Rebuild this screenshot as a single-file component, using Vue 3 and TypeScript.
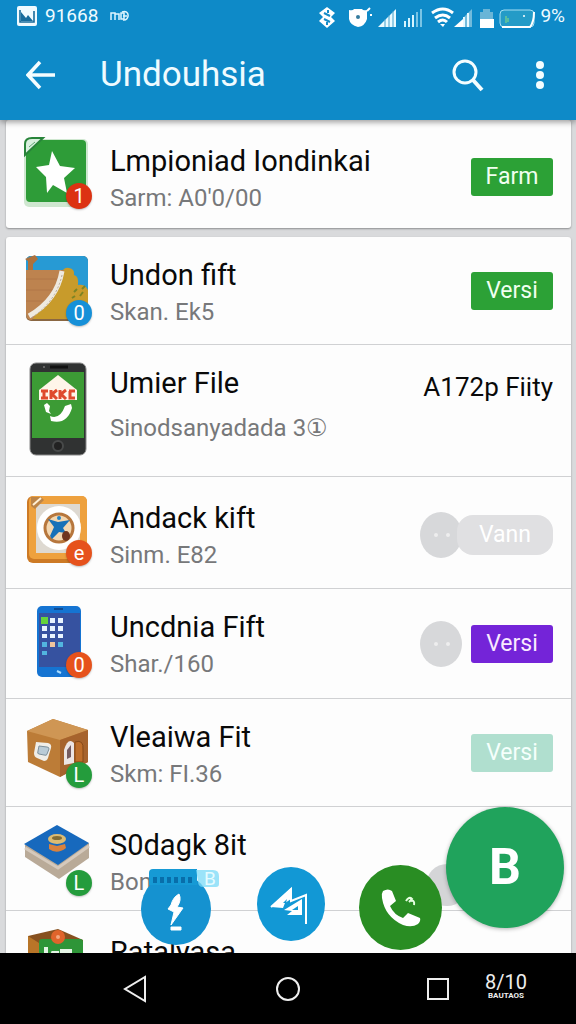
<script setup lang="ts">
interface Item {
  icon: string
  title: string
  sub?: string
  size: string
  action?: string
  tone?: string
  price?: string
  avatar?: boolean
  badge?: string
  badgeTone?: string
}

const groups: Item[][] = [
  [
    { icon: 'star', title: 'Lmpioniad Iondinkai', sub: "Sarm: A0'0/00", size: 'first', action: 'Farm', tone: 'green', badge: '1', badgeTone: 'red' },
  ],
  [
    { icon: 'desert', title: 'Undon fift', sub: 'Skan. Ek5', size: 'medium', action: 'Versi', tone: 'green', badge: '0', badgeTone: 'blue' },
    { icon: 'phone', title: 'Umier File', sub: 'Sinodsanyadada 3①', size: 'tall', price: 'A172p Fiity' },
    { icon: 'frame', title: 'Andack kift', sub: 'Sinm. E82', size: 'roomy', action: 'Vann', tone: 'muted', avatar: true, badge: 'e', badgeTone: 'orange' },
    { icon: 'tablet', title: 'Uncdnia Fift', sub: 'Shar./160', size: 'large', action: 'Versi', tone: 'purple', avatar: true, badge: '0', badgeTone: 'orange' },
    { icon: 'box', title: 'Vleaiwa Fit', sub: 'Skm: FI.36', size: 'medium', action: 'Versi', tone: 'mint', badge: 'L', badgeTone: 'leaf' },
    { icon: 'book', title: 'S0dagk 8it', sub: 'Bons', size: 'small', badge: 'L', badgeTone: 'leaf' },
    { icon: 'crate', title: 'Ratalyasa', size: 'last' },
  ],
]
</script>

<template>
  <div class="screen">
    <header class="header">
      <div class="status">
        <svg class="status-picture" viewBox="0 0 20 20" aria-hidden="true">
          <rect width="20" height="20" rx="2" fill="#effaff" />
          <path d="M3 4v12h14V5" fill="none" stroke="#176b9c" stroke-width="1.6" />
          <path d="M4 15V6l5 6 2-3 5 6z" fill="#176b9c" />
        </svg>
        <span>91668</span>
        <svg class="status-link" viewBox="0 0 20 12" aria-hidden="true">
          <path d="M1 10V3h4v7M5 4h4v6M9 10V4M11 3h3v6h-3z" fill="none" stroke="#dff6ff" stroke-width="1.5" />
          <path d="M12 2c8-3 8 9 1 8M13 6h4" fill="none" stroke="#dff6ff" stroke-width="1.5" />
        </svg>
        <svg class="status-icons" viewBox="0 0 220 24" aria-hidden="true">
          <path d="M9 3l8 6-4 4 4 4-8 7-8-7 4-4-4-4z" fill="#fff" />
          <path d="M6 9l6 3M6 15l6 3M10 6v3M9 18v3" stroke="#168cc7" stroke-width="2" />
          <path d="M31 6q4 1 5-1h8q1 2 5 1v9q-2 7-9 8-8-2-9-8z" fill="#fff" />
          <circle cx="40" cy="13" r="2" fill="#347b9e" />
          <path d="M49 7l3-3M52 11h2" stroke="#fff" stroke-width="2" />
          <path d="M60 23L78 5v18z" fill="#e9faff" />
          <path d="M67 15v8M71 11v12M75 7v16" stroke="#419fcc" stroke-width="1" />
          <path d="M87 17v6M91 14v9M95 11v12" stroke="#d6f5ff" stroke-width="2" />
          <path d="M99 8v15M103 5v18" stroke="#79c4e5" stroke-width="2" />
          <path d="M114 9q11-8 21 0M117 14q8-6 15 0M120 18q5-4 9 0" fill="none" stroke="#fff" stroke-width="3" />
          <path d="M122 20h5l-2 3z" fill="#fff" />
          <path d="M136 23l9-8v8z" fill="#fff" />
          <path d="M146 13l8-8v18h-8z" fill="#72bbdc" />
          <path d="M146 13v10M150 9v14" stroke="#e5f8ff" stroke-width="2" />
          <path d="M162 8h3V5h7v3h3v7h-13z" fill="#69b5d7" />
          <rect x="162" y="15" width="14" height="9" fill="#fff" />
          <rect x="182" y="6" width="34" height="17" rx="4" fill="#249bc7" stroke="#a5dff3" />
          <path d="M184 23h28q4-5 4-15" fill="none" stroke="#fff" stroke-width="2" />
          <path d="M188 12v7M190 14v4" stroke="#57bda2" stroke-width="2" />
          <circle cx="206" cy="12" r="1" fill="#fff" />
        </svg>
        <span class="battery">9%</span>
      </div>
      <div class="toolbar">
        <button class="icon-button" aria-label="Back">
          <svg width="30" height="30" viewBox="0 0 30 30"><path d="M14 2L2 15l12 13M2 15h27" fill="none" stroke="#f4fdff" stroke-width="3.500" /></svg>
        </button>
        <h1>Undouhsia</h1>
        <button class="icon-button search" aria-label="Search">
          <svg width="34" height="34" viewBox="0 0 34 34"><circle cx="14" cy="14" r="11" fill="none" stroke="#f4fdff" stroke-width="3" /><path d="M22 22l9 10" stroke="#f4fdff" stroke-width="4" /></svg>
        </button>
        <button class="icon-button" aria-label="More">
          <svg width="10" height="30" viewBox="0 0 10 30"><g fill="#f4fdff"><circle cx="5" cy="5" r="4" /><circle cx="5" cy="15" r="4" /><circle cx="5" cy="25" r="4" /></g></svg>
        </button>
      </div>
    </header>

    <main class="content">
      <ul v-for="(group, g) in groups" :key="g" class="card">
        <li v-for="item in group" :key="item.title" :class="['row', 'row-' + item.size]">
          <div class="thumb">
            <svg v-if="item.icon === 'star'" viewBox="0 0 68 72" aria-hidden="true">
              <rect y="2" width="64" height="68" rx="5" fill="#cfe7d0" />
              <rect x="2" y="3" width="60" height="62" rx="4" fill="#2e9c38" />
              <path d="M28 14l8 15 15 2-11 10 3 15-14-8-6 8-1-16-10-10 13-2z" fill="#fff" />
              <path d="M1 18V7q0-6 7-6h11z" fill="#d9f0df" stroke="#28843a" stroke-width="2" />
              <path d="M5 10l6-5" stroke="#60a875" />
            </svg>
            <svg v-else-if="item.icon === 'desert'" viewBox="0 0 68 72" aria-hidden="true">
              <rect x="2" y="2" width="62" height="65" rx="5" fill="#8a6742" />
              <rect x="2" y="2" width="62" height="63" rx="5" fill="#279ad4" />
              <path d="M8 65l29-46q3-6 8-5 6 1 5 7 5 1 4 10 7-1 10 5v29z" fill="#c89b2b" />
              <path d="M50 38l3-3M56 42l3-4M48 44l3-2M58 35l3-3" stroke="#7c8424" stroke-width="2" />
              <path d="M2 16h38Q35 45 12 60L8 66q-6 0-6-6z" fill="#bd834f" />
              <path d="M2 25h35M2 36h32M2 47h22" stroke="#b17748" />
              <path d="M38 17Q33 46 5 62" fill="none" stroke="#eee9df" stroke-width="5" />
              <path d="M38 21Q32 48 7 64" fill="none" stroke="#b8ab9c" stroke-dasharray="2 2" />
              <path d="M1 5l10-4 3 4-5 5v6H4V7z" fill="#ae713d" />
            </svg>
            <svg v-else-if="item.icon === 'phone'" class="thumb-tall" viewBox="0 0 68 96" aria-hidden="true">
              <rect x="6" y="1" width="56" height="92" rx="6" fill="#303232" stroke="#888" />
              <path d="M26 5h18" stroke="#111" stroke-width="3" />
              <circle cx="20" cy="5" r="1" fill="#777" />
              <rect x="8" y="10" width="52" height="66" fill="#3c9b35" />
              <path d="M15 28l19-15 19 15v10H15z" fill="#fff5e9" />
              <path d="M17 29h7m-4 0v7m-3 0h7M27 28v9M33 28l-5 4 5 5M36 28v9M42 28l-5 4 5 5M45 29h6m-5 0v7h5" fill="none" stroke="#df4b2d" stroke-width="3" />
              <path d="M20 43l3-2 3 3-1 5 2 3-5-2zM26 54q10 4 15-10l6-2 1 4q-5 17-21 13z" fill="#fff" />
              <circle cx="34" cy="84" r="5" fill="#222" stroke="#484a4a" stroke-width="2" />
            </svg>
            <svg v-else-if="item.icon === 'frame'" viewBox="0 0 68 72" aria-hidden="true">
              <rect x="3" y="2" width="60" height="67" rx="6" fill="#cd7a25" />
              <rect x="5" y="2" width="58" height="63" rx="5" fill="#eea13e" />
              <rect x="12" y="10" width="44" height="49" fill="#ded9d1" />
              <circle cx="35" cy="34" r="22" fill="#fff" />
              <circle cx="35" cy="34" r="14" fill="#f3d7b1" stroke="#b7773d" stroke-width="3" />
              <path d="M24 25l10 3 12-2-7 8 3 5-7-1-7 7-2-3 4-9z" fill="#1771b8" />
              <circle cx="35" cy="24" r="2" fill="#2583c5" />
              <ellipse cx="42" cy="42" rx="4" ry="5" fill="#6f351f" />
              <path d="M7 3h10l3 3-9 9-4-3z" fill="#bc8447" /><path d="M9 11l8-7" stroke="#fff0d5" stroke-width="2" />
            </svg>
            <svg v-else-if="item.icon === 'tablet'" viewBox="0 0 68 72" aria-hidden="true">
              <rect x="13" width="44" height="71" rx="5" fill="#1574d2" />
              <rect x="15" y="7" width="41" height="54" fill="#3652a0" />
              <path d="M30 3h9" stroke="#0f4b92" stroke-width="2" />
              <g fill="#e8f4ff">
                <rect x="26" y="12" width="5" height="5" /><rect x="34" y="12" width="5" height="5" />
                <rect x="18" y="20" width="5" height="5" /><rect x="26" y="20" width="5" height="5" /><rect x="34" y="20" width="5" height="5" />
                <rect x="18" y="28" width="5" height="4" /><rect x="26" y="28" width="5" height="4" /><rect x="34" y="28" width="5" height="4" />
              </g>
              <rect x="17" y="11" width="7" height="7" fill="#65d43b" />
              <g fill="#52b5df"><rect x="18" y="36" width="5" height="5" /><rect x="34" y="36" width="5" height="5" /><rect x="18" y="45" width="5" height="4" /></g>
              <rect x="26" y="36" width="5" height="5" fill="#efc49d" />
              <path d="M33 65l4 2" stroke="#a8dcff" stroke-width="2" />
            </svg>
            <svg v-else-if="item.icon === 'box'" viewBox="0 0 68 72" aria-hidden="true">
              <path d="M3 15L29 3l35 11v32L36 61 4 46z" fill="#bc7c37" />
              <path d="M3 15L29 3l35 11-28 10z" fill="#cf9654" />
              <path d="M36 24l28-10v32L36 61z" fill="#a6632d" />
              <path d="M12 26l12 1q4 1 3 5l-3 10q-1 3-4 3l-7-3q-3-1-3-5z" fill="#f0eee8" />
              <path d="M15 30l8 1q2 0 2 2l-2 5q0 2-3 1l-5-1q-2 0-1-3z" fill="#b9cbd6" stroke="#7d909b" />
              <path d="M40 49V34q4-13 10-7v20z" fill="#ece4e4" />
              <path d="M43 43V34l4-5v12z" fill="#755b61" /><path d="M51 26q9-3 8 8v12h-8z" fill="#be6e2b" stroke="#854817" />
            </svg>
            <svg v-else-if="item.icon === 'book'" viewBox="0 0 68 72" aria-hidden="true">
              <path d="M1 21v12l34 22 30-21V19z" fill="#b9aa98" /><path d="M1 24l33 20 31-22" fill="none" stroke="#d5c9bc" stroke-width="3" />
              <path d="M0 20L33 1l32 18-31 22z" fill="#1769bd" />
              <ellipse cx="33" cy="15" rx="9" ry="5" fill="#dcbb72" /><ellipse cx="33" cy="14" rx="5" ry="2" fill="#816c35" />
              <path d="M25 20l8 2 8-2 1 4q-9 7-17 1z" fill="#d8823e" />
            </svg>
            <svg v-else viewBox="0 0 68 72" aria-hidden="true">
              <path d="M4 8L34 1l25 11v56H4z" fill="#87511f" /><path d="M4 8l11 7v45H4z" fill="#b87528" />
              <rect x="15" y="11" width="44" height="55" rx="3" fill="#2e9538" />
              <path d="M22 19v12h5l2-6h6M38 31v-8h8v8" fill="none" stroke="#e5f4e5" stroke-width="4" />
              <circle cx="34" cy="9" r="7" fill="#df642b" /><circle cx="34" cy="9" r="2" fill="#f4a77e" />
            </svg>
            <span v-if="item.badge" :class="['badge', 'badge-' + item.badgeTone]">{{ item.badge }}</span>
          </div>
          <div class="text">
            <h2>{{ item.title }}</h2>
            <p v-if="item.sub">{{ item.sub }}</p>
          </div>
          <div class="aside">
            <svg v-if="item.avatar" class="avatar" viewBox="0 0 42 46" aria-hidden="true">
              <ellipse cx="21" cy="23" rx="21" ry="23" fill="#d7d8da" /><circle cx="16" cy="23" r="2" fill="#eee" /><circle cx="28" cy="23" r="2" fill="#eee" />
            </svg>
            <span v-if="item.price" class="price">{{ item.price }}</span>
            <button v-if="item.action" :class="['action', 'action-' + item.tone]">{{ item.action }}</button>
          </div>
        </li>
      </ul>

      <span class="ghost" />
      <button class="fab fab-flash" aria-label="Quick action">
        <svg width="80" height="78" viewBox="0 0 80 78">
          <ellipse cx="35" cy="42" rx="35" ry="36" fill="#1592d0" />
          <path d="M8 18V6q0-4 4-4h44v16z" fill="#169ad5" />
          <path d="M12 13h42" stroke="#086eaa" stroke-width="6" stroke-dasharray="4 3" />
          <path d="M55 3h17q6 0 6 6v8q0 3-3 3H62q-5 0-5-6z" fill="#79d9f7" opacity=".75" />
          <text x="63" y="18" font-family="Roboto, sans-serif" font-size="19" fill="#e6fbff">B</text>
          <path d="M38 27q-6 3-8 11l-3 4 6 3-3 13 12-17-6-1q5-7 2-13zM30 60h10v3H30z" fill="#fff" stroke="#fff" />
        </svg>
      </button>
      <button class="fab fab-send" aria-label="Send">
        <svg width="68" height="74" viewBox="0 0 68 74">
          <ellipse cx="34" cy="37" rx="34" ry="37" fill="#1298d5" />
          <path d="M14 40l20-18v12l15-6v29" fill="none" stroke="#fff" stroke-width="2" />
          <path d="M14 40l20-19v11l-6 4-2 5zM27 43l18-11v16H30l5-4z" fill="#fff" />
          <path d="M26 36l4-4-1 4zM35 43l6-4v4z" fill="#1298d5" />
        </svg>
      </button>
      <button class="fab fab-call" aria-label="Call">
        <svg width="83" height="85" viewBox="0 0 83 85">
          <ellipse cx="41.500" cy="42.500" rx="41.500" ry="42.500" fill="#298d23" />
          <path d="M24 26q5-3 9 0l4 10-6 5q4 9 13 12l5-5 12 5q1 3-2 6-6 4-15 1-18-8-21-27-1-4 1-7z" fill="#fff" />
          <path d="M47 36q3-5 6-2l-3 3M52 36q4-1 3 4" fill="none" stroke="#e7ffe2" stroke-width="2" />
        </svg>
      </button>
      <button class="fab fab-main">B</button>
    </main>

    <nav class="nav">
      <button class="nav-back" aria-label="Back"><svg width="24" height="28" viewBox="0 0 24 28"><path d="M22 2v24L2 14z" /></svg></button>
      <button class="nav-home" aria-label="Home"><svg width="26" height="26" viewBox="0 0 26 26"><circle cx="13" cy="13" r="11" /></svg></button>
      <button class="nav-recent" aria-label="Recent apps"><svg width="24" height="24" viewBox="0 0 24 24"><rect x="2" y="2" width="20" height="20" /></svg></button>
      <div class="clock"><strong>8/10</strong><small>BAUTAOS</small></div>
    </nav>
  </div>
</template>

<style>
body { margin: 0; background: #000; }
</style>

<style scoped>
.screen { height: 100vh; display: flex; flex-direction: column; overflow: hidden; background: #d9dadc; font-family: Roboto, "DejaVu Sans", sans-serif; }
button { padding: 0; border: 0; background: none; color: inherit; font: inherit; cursor: pointer; }
svg { display: block; }
.header { position: relative; z-index: 2; height: 120px; flex: none; background: #0e8ac8; color: #effbff; box-shadow: 0 2px 6px rgba(0, 0, 0, 0.4); }
.status { display: flex; align-items: center; height: 32px; padding: 0 11px 0 17px; font-size: 19px; line-height: 32px; }
.status-picture { width: 20px; height: 20px; margin-right: 8px; }
.status-link { width: 20px; height: 12px; margin-left: 12px; }
.status-icons { width: 220px; height: 24px; margin-left: auto; }
.battery { margin-left: 2px; }
.toolbar { display: flex; align-items: center; height: 86px; padding: 0 31px 0 26px; }
.toolbar h1 { flex: 1; margin: 0 0 0 44px; font-size: 35px; line-height: 44px; font-weight: 400; }
.search { margin-right: 50px; }
.content { position: relative; flex: 1; min-height: 0; overflow: hidden; }
.card { list-style: none; margin: 0 5px 9px 6px; padding: 0; border-radius: 3px; background: #fdfdfd; box-shadow: 0 1px 2px rgba(0, 0, 0, 0.35); }
.row { display: flex; box-sizing: border-box; padding: 0 18px; border-bottom: 1px solid #d0d1d3; }
.row:last-child { border-bottom: 0; }
.row-small { min-height: 104px; }
.row-first, .row-medium { min-height: 108px; }
.row-large { min-height: 110px; }
.row-roomy { min-height: 112px; }
.row-tall { min-height: 132px; }
.row-last { min-height: 120px; }
.thumb { position: relative; align-self: flex-start; width: 68px; margin-top: 17px; }
.thumb svg { width: 68px; height: 72px; }
.thumb .thumb-tall { height: 96px; }
.badge { position: absolute; right: 0; bottom: 0; width: 26px; height: 26px; border-radius: 50%; color: #fff; font-size: 20px; line-height: 26px; text-align: center; box-shadow: 0 1px 2px rgba(0, 0, 0, 0.25); }
.badge-red { background: #dc3212; }
.badge-blue { background: #1690d8; }
.badge-orange { background: #e6521c; }
.badge-leaf { background: #249c3c; }
.text { flex: 1; min-width: 0; margin-left: 18px; padding-top: 20px; white-space: nowrap; }
.row-first .text, .row-roomy .text, .row-last .text { padding-top: 23px; }
.text h2 { margin: 0; color: #090909; font-size: 29px; line-height: 36px; font-weight: 400; }
.text p { margin: 0; color: #77787a; font-size: 24px; line-height: 38px; }
.row-tall p { line-height: 54px; }
.aside { display: flex; align-items: center; gap: 9px; }
.row-first .aside, .row-roomy .aside { padding-top: 5px; }
.row-tall .aside { align-items: flex-start; padding-top: 24px; }
.price { color: #090909; font-size: 26px; line-height: 36px; }
.avatar { width: 42px; height: 46px; }
.action { width: 82px; height: 38px; border-radius: 3px; color: #f0fff0; font-size: 23px; line-height: 38px; }
.action-green { background: #2ca136; }
.action-purple { background: #7424d8; color: #fae9ff; }
.action-mint { background: #b0dfcf; color: #f5fffc; }
.action-muted { width: 96px; height: 40px; margin-left: -14px; border-radius: 16px; background: #e0e0e2; color: #fff; }
.ghost { position: absolute; right: 108px; bottom: 47px; width: 42px; height: 42px; border-radius: 50%; background: #d4d5d7; }
.fab { position: absolute; }
.fab-flash { left: 24.5%; bottom: 8px; }
.fab-send { left: 44.6%; bottom: 12px; }
.fab-call { left: 62.3%; bottom: 3px; }
.fab-main { right: 12px; bottom: 25px; width: 118px; height: 121px; border-radius: 50%; background: #20a35c; color: #fff; font-size: 50px; font-weight: 700; line-height: 121px; box-shadow: 0 1px 4px rgba(0, 0, 0, 0.3); }
.nav { display: grid; grid-template-columns: 111fr 48px 105fr 48px 102fr 48px 22fr 44px 48fr; flex: none; height: 71px; align-items: center; background: #000; color: #eee; }
.nav svg { margin: auto; fill: none; stroke: #eee; stroke-width: 2; }
.nav-back { grid-column: 2; }
.nav-home { grid-column: 4; }
.nav-recent { grid-column: 6; }
.clock { grid-column: 8; padding-bottom: 6px; text-align: center; }
.clock strong { display: block; font-size: 20px; line-height: 20px; font-weight: 400; }
.clock small { display: block; font-size: 8px; line-height: 8px; font-weight: 700; }
</style>
